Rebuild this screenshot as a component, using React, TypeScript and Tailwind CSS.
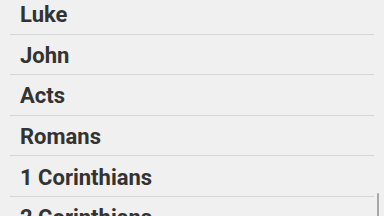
const books = ["Luke", "John", "Acts", "Romans", "1 Corinthians", "2 Corinthians"];

export default function App() {
  return (
    <div className="relative h-[216px] w-[384px] overflow-hidden bg-[#f0f0f0] font-['Roboto',sans-serif]">
      <ul className="mt-[-6px]">
        {books.map((b) => (
          <li key={b} className="mx-[10px] flex h-[40.6px] items-center border-b-[1.5px] border-[#d5d5d5] pl-[10px] pt-[2px] text-[22px] font-bold text-[#333333]">
            {b}
          </li>
        ))}
      </ul>
      <div className="absolute right-[5px] top-[193px] h-[30px] w-[2.5px] rounded-sm bg-[#a8a8a8]" />
    </div>
  );
}
